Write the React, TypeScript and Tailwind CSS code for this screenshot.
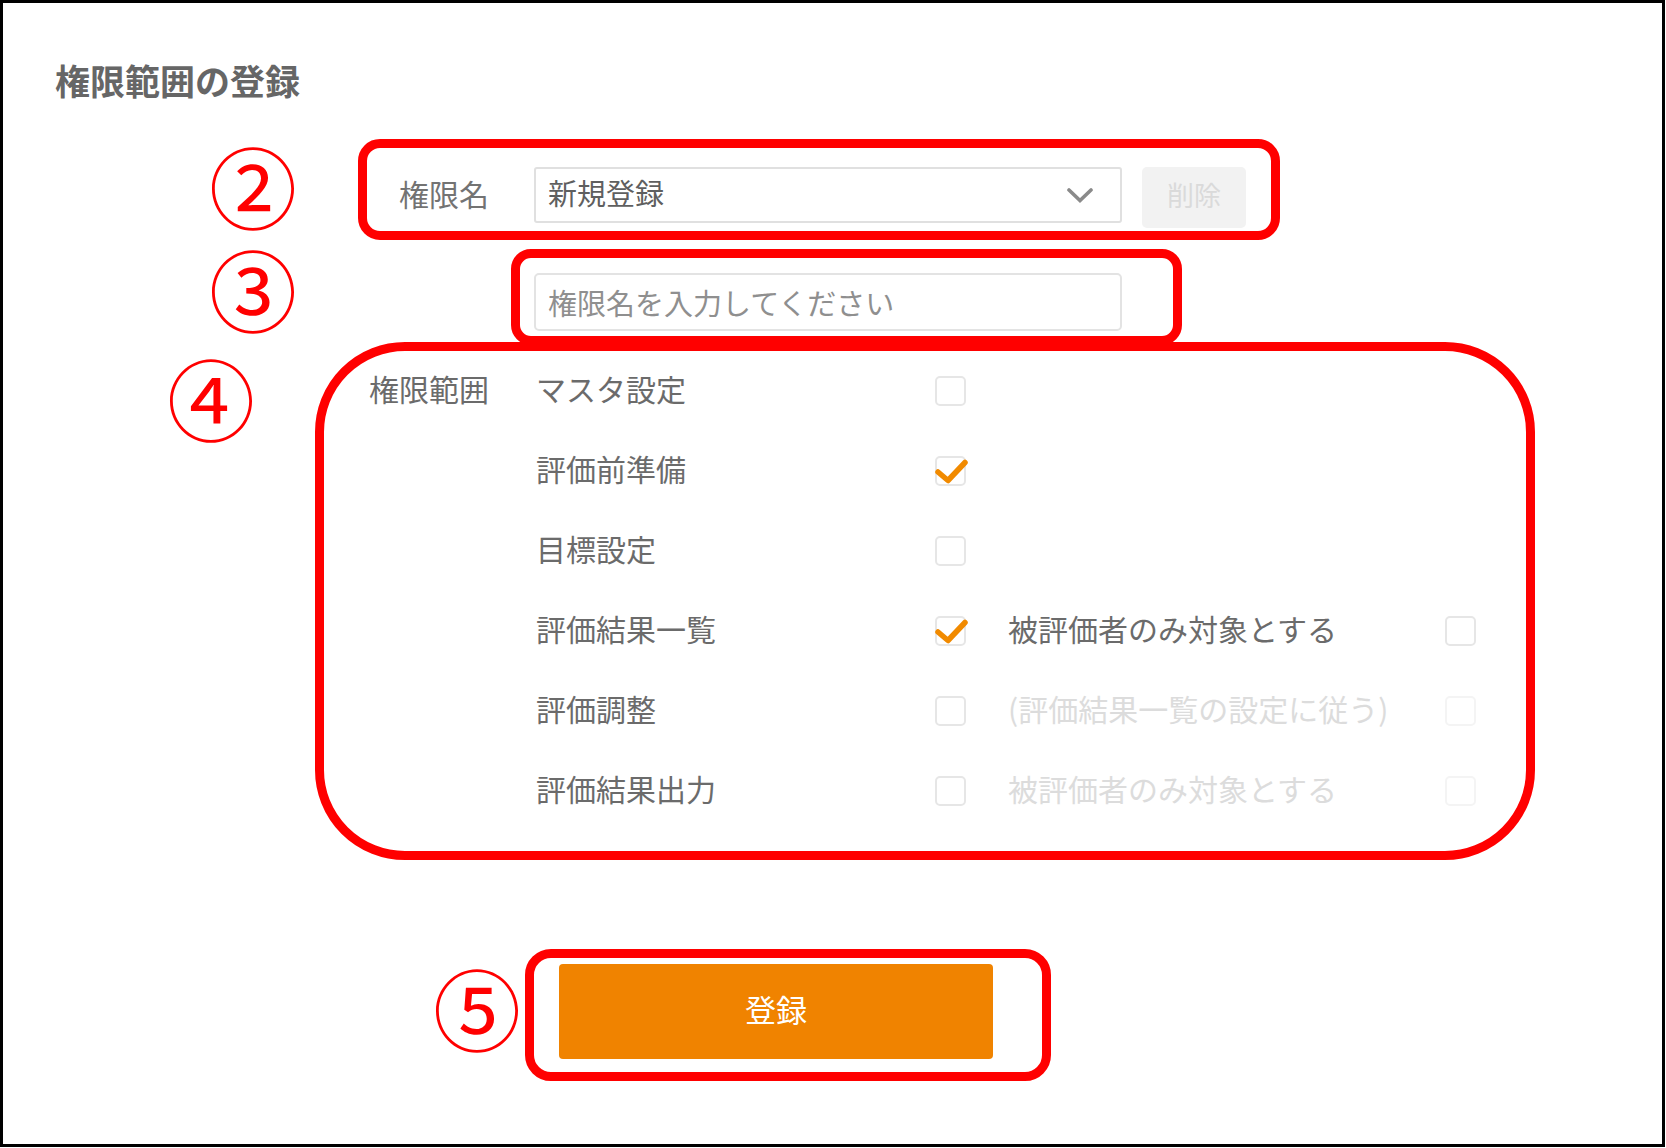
import React from "react";

type Row = {
  label: string;
  checked: boolean;
  sub?: { label: string; disabled: boolean };
};

const rows: Row[] = [
  { label: "マスタ設定", checked: false },
  { label: "評価前準備", checked: true },
  { label: "目標設定", checked: false },
  { label: "評価結果一覧", checked: true, sub: { label: "被評価者のみ対象とする", disabled: false } },
  { label: "評価調整", checked: false, sub: { label: "(評価結果一覧の設定に従う)", disabled: true } },
  { label: "評価結果出力", checked: false, sub: { label: "被評価者のみ対象とする", disabled: true } },
];

function Mark({ n, className = "" }: { n: string; className?: string }) {
  return (
    <span
      className={`flex h-[82px] w-[82px] shrink-0 items-center justify-center pb-[12px] text-[88px] leading-[70px] text-[#ff0000] ${className}`}
    >
      {n}
    </span>
  );
}

function Checkbox({ checked = false, faint = false }: { checked?: boolean; faint?: boolean }) {
  return (
    <span
      className={`relative block h-[30px] w-[31px] shrink-0 rounded-[5px] border-2 ${
        faint ? "border-[#f4f4f4]" : "border-[#e6e6e6]"
      }`}
    >
      {checked && (
        <svg className="absolute -left-[2px] -top-[2px] h-[30px] w-[31px] overflow-visible" viewBox="0 0 31 30">
          <path
            d="M3 16 L13 24.5 L30 6.5"
            fill="none"
            stroke="#f18a00"
            strokeWidth="5.5"
            strokeLinecap="round"
            strokeLinejoin="round"
          />
        </svg>
      )}
    </span>
  );
}

export default function App() {
  return (
    <div className="h-[1147px] w-[1665px] border-[3px] border-black bg-white font-['Noto_Sans_CJK_JP','Liberation_Sans',sans-serif] text-[#6b6b6b]">
      <h1 className="ml-[52px] mt-[57px] text-[35px] font-bold leading-[40px] text-[#666]">権限範囲の登録</h1>

      {/* ② 権限名 */}
      <div className="mt-[39px] flex items-center">
        <Mark n="②" className="ml-[209px]" />
        <div className="ml-[64px] flex h-[101px] w-[922px] items-start rounded-[22px] border-[9px] border-[#ff0000] pl-[32px] pt-[19px]">
          <span className="flex h-[56px] w-[135px] items-center pb-[4px] text-[30px] text-[#737373]">権限名</span>
          <div className="flex h-[56px] w-[588px] items-center justify-between rounded-[3px] border-2 border-[#e0e0e0] pl-[12px] pr-[27px]">
            <span className="pb-[4px] text-[29px] text-[#5f5f5f]">新規登録</span>
            <svg width="26" height="15" viewBox="0 0 26 15">
              <path d="M2 2 L13 12.5 L24 2" fill="none" stroke="#8a8a8a" strokeWidth="3.6" strokeLinecap="round" />
            </svg>
          </div>
          <button className="ml-[20px] flex h-[61px] w-[104px] items-center justify-center rounded-[5px] bg-[#f2f2f2] pb-[4px] text-[27px] text-[#dadada]">
            削除
          </button>
        </div>
      </div>

      {/* ③ 新規名 */}
      <div className="mt-[9px] flex items-start">
        <Mark n="③" className="ml-[209px] mt-[3px]" />
        <div className="ml-[217px] h-[96px] w-[671px] rounded-[20px] border-[9px] border-[#ff0000] pl-[14px] pt-[15px]">
          <input
            readOnly
            placeholder="権限名を入力してください"
            className="h-[58px] w-[588px] rounded-[5px] border-2 border-[#e3e3e3] pl-[12px] text-[29px] outline-none placeholder:text-[#8f8f8f]"
          />
        </div>
      </div>

      {/* ④ 権限範囲 */}
      <div className="-mt-[3px] flex items-start">
        <Mark n="④" className="ml-[167px] mt-[19px]" />
        <div className="ml-[63px] flex h-[518px] w-[1220px] rounded-[90px] border-[9px] border-[#ff0000]">
          <div className="w-[212px] pl-[45px]">
            <div className="flex h-[80px] items-center pb-[6px] text-[30px]">権限範囲</div>
          </div>
          <div className="flex flex-col">
            {rows.map((r, i) => (
              <div key={i} className="flex h-[80px] items-center text-[30px]">
                <span className="mb-[6px] w-[399px]">{r.label}</span>
                <Checkbox checked={r.checked} />
                {r.sub && (
                  <>
                    <span className={`mb-[6px] ml-[42px] w-[437px] ${r.sub.disabled ? "text-[#dcdcdc]" : ""}`}>
                      {r.sub.label}
                    </span>
                    <Checkbox faint={r.sub.disabled} />
                  </>
                )}
              </div>
            ))}
          </div>
        </div>
      </div>

      {/* ⑤ 登録 */}
      <div className="mt-[89px] flex items-start">
        <Mark n="⑤" className="ml-[433px] mt-[22px]" />
        <div className="ml-[7px] h-[132px] w-[526px] rounded-[26px] border-[9px] border-[#ff0000] pl-[25px] pt-[6px]">
          <button className="flex h-[95px] w-[434px] items-center justify-center rounded-[4px] bg-[#f08300] pb-[4px] text-[31px] text-white">
            登録
          </button>
        </div>
      </div>
    </div>
  );
}
